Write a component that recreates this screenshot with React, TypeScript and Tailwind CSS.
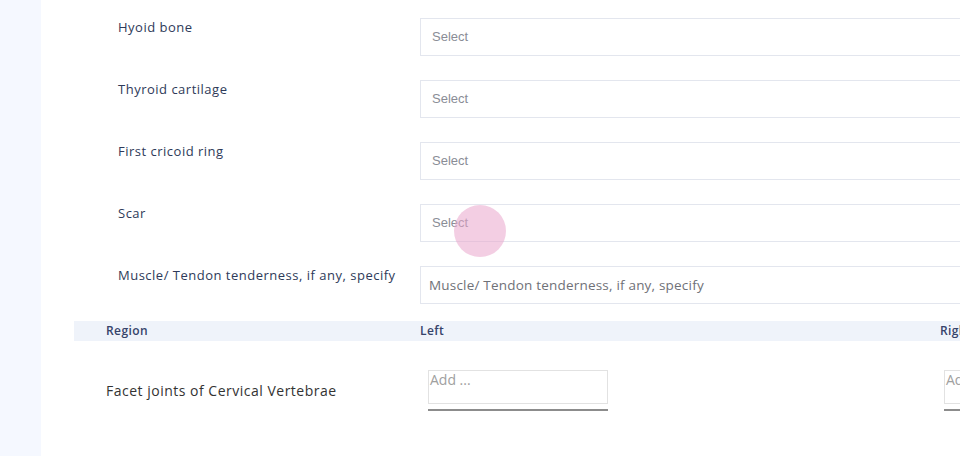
import React from 'react';

const font = { fontFamily: '"Open Sans", "Noto Sans", sans-serif' };

const fields = [
  { label: 'Hyoid bone', kind: 'select' },
  { label: 'Thyroid cartilage', kind: 'select' },
  { label: 'First cricoid ring', kind: 'select' },
  { label: 'Scar', kind: 'select' },
  { label: 'Muscle/ Tendon tenderness, if any, specify', kind: 'text' },
];

function FieldRow({ label, kind }: { label: string; kind: string }) {
  return (
    <div className="flex items-start">
      <div className="w-[343px] shrink-0 pl-[41px] text-[13px] font-medium leading-[18px] tracking-[0.5px] text-[#2e3a59]">
        {label}
      </div>
      <div className="flex h-[38px] w-[600px] shrink-0 items-center border border-[#e3e6ee] bg-white">
        {kind === 'select' ? (
          <span
            className="pl-[11px] text-[13px] text-[#8a8d96]"
            style={{ fontFamily: '"Liberation Sans", Arial, sans-serif' }}
          >
            Select
          </span>
        ) : (
          <span className="pl-[8px] text-[13.5px] tracking-[0.2px] text-[#6f7178]">{label}</span>
        )}
      </div>
    </div>
  );
}

function AddBox() {
  return (
    <div className="w-[180px]">
      <div className="h-[34px] overflow-hidden border border-[#e2e2e2] px-[1px] text-[14px] leading-[18px] text-[#a0a0a0]">
        Add ...
      </div>
      <div className="mt-[5px] h-[2px] bg-[#8c8c8c]" />
    </div>
  );
}

export default function App() {
  return (
    <div className="relative flex h-[456px] w-[960px] overflow-hidden bg-white" style={font}>
      <div className="w-[41px] shrink-0 bg-[#f5f8ff]" />
      <div className="flex-1 overflow-hidden pt-[18px]">
        <div className="flex flex-col gap-[24px] pl-[36px]">
          {fields.map((f) => (
            <FieldRow key={f.label} label={f.label} kind={f.kind} />
          ))}
        </div>

        <div className="ml-[33px] mt-[17px] grid h-[20px] w-[1000px] grid-cols-[346px_520px_1fr] items-center bg-[#eff3fa] text-[12px] font-semibold tracking-[0.4px] text-[#36436a]">
          <div className="pl-[32px]">Region</div>
          <div>Left</div>
          <div>Right</div>
        </div>

        <div className="ml-[33px] mt-[29px] grid w-[1000px] grid-cols-[346px_520px_1fr] items-start">
          <div className="pl-[32px] pt-[10px] text-[14px] tracking-[0.5px] text-[#333333]">
            Facet joints of Cervical Vertebrae
          </div>
          <div className="pl-[8px]">
            <AddBox />
          </div>
          <div className="pl-[4px]">
            <AddBox />
          </div>
        </div>
      </div>

      <div className="pointer-events-none absolute left-[454px] top-[205px] h-[52px] w-[52px] rounded-full bg-[#eaa6cc]/55" />
    </div>
  );
}
